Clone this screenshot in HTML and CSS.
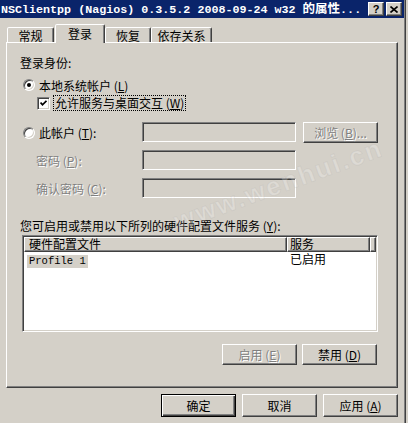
FILE: index.html
```html
<!DOCTYPE html>
<html lang="zh-CN">
<head>
<meta charset="utf-8">
<title>NSClientpp 的属性</title>
<link rel="stylesheet" href="styles.css">
</head>
<body>
<div class="window">
  <div class="titlebar">
    <span class="title">NSClientpp (Nagios) 0.3.5.2 2008-09-24 w32 <span class="cjk">的属性</span>...</span>
    <div class="tbtns">
      <span class="tbtn help">?</span>
      <span class="tbtn close"><svg width="8" height="7" viewBox="0 0 8 7"><path d="M0.5 0.5 L7.5 6.5 M7.5 0.5 L0.5 6.5" stroke="#000" stroke-width="1.6" fill="none"/></svg></span>
    </div>
  </div>

  <div class="tabs">
    <div class="tab t1">常规</div>
    <div class="tab t2 sel">登录</div>
    <div class="tab t3">恢复</div>
    <div class="tab t4">依存关系</div>
  </div>

  <div class="panel">
    <div class="lbl l1">登录身份:</div>
    <div class="row r-radio1"><span class="radio on"></span><span class="rtext">本地系统帐户 (<u>L</u>)</span></div>
    <div class="row r-check">
      <span class="check"><svg width="7" height="7" viewBox="0 0 7 7"><path d="M0.5 2.5 L2.5 4.8 L6.5 0.8" stroke="#000" stroke-width="1.8" fill="none"/></svg></span>
      <span class="focus">允许服务与桌面交互 (<u>W</u>)</span>
    </div>
    <div class="row r-field r-acct">
      <span class="fl fl-radio"><span class="radio"></span><span class="rtext">此帐户 (<u>T</u>):</span></span>
      <span class="input"></span>
      <span class="btn dis browse">浏览 (<u>B</u>)...</span>
    </div>
    <div class="row r-field r-pwd">
      <span class="fl fl-plain dis">密码 (<u>P</u>):</span>
      <span class="input"></span>
    </div>
    <div class="row r-field r-pwd">
      <span class="fl fl-plain dis">确认密码 (<u>C</u>):</span>
      <span class="input"></span>
    </div>
    <div class="lbl l2">您可启用或禁用以下所列的硬件配置文件服务 (<u>Y</u>):</div>
    <div class="list">
      <div class="hdr">
        <span class="hc hc1">硬件配置文件</span>
        <span class="hc hc2">服务</span>
        <span class="hc hc3"></span>
      </div>
      <div class="lrow">
        <span class="c1"><span class="selitem">Profile 1</span></span>
        <span class="c2">已启用</span>
      </div>
    </div>
    <div class="prow">
      <span class="btn dis pbtn">启用 (<u>E</u>)</span>
      <span class="btn pbtn">禁用 (<u>D</u>)</span>
    </div>
  </div>

  <div class="footer">
    <span class="btn fbtn default">确定</span>
    <span class="btn fbtn">取消</span>
    <span class="btn fbtn">应用 (<u>A</u>)</span>
  </div>

  <div class="watermark" aria-hidden="true">www.wenhui.cn</div>
</div>
</body>
</html>
```

FILE: styles.css
```css
* { box-sizing: border-box; }
html, body { margin: 0; padding: 0; }
body {
  background: #d4d0c8;
  width: 408px;
  height: 423px;
  overflow: hidden;
  font-family: "Noto Sans CJK SC", "Liberation Sans", sans-serif;
  font-size: 12px;
  color: #000;
}
u { text-decoration: underline; text-underline-offset: 1px; }

.window {
  position: relative;
  width: 406px;
  height: 423px;
  border-right: 1px solid #404040;
  box-shadow: inset -1px 0 #808080;
}

/* title bar */
.titlebar {
  height: 18px;
  width: 404px;
  background: #0a246a;
  display: flex;
  align-items: center;
  justify-content: space-between;
  padding: 0 2px 0 1px;
}
.title {
  flex: none;
  color: #fff;
  font-family: "Liberation Mono", monospace;
  font-weight: bold;
  font-size: 11.7px;
  white-space: nowrap;
  line-height: 18px;
}
.title .cjk {
  font-family: "Noto Sans CJK SC", sans-serif;
  font-size: 12.5px;
}
.tbtns { display: flex; gap: 2px; flex: none; }
.tbtn {
  width: 16px;
  height: 14px;
  background: #d4d0c8;
  border: 1px solid;
  border-color: #fff #404040 #404040 #fff;
  box-shadow: inset -1px -1px #808080;
  display: flex;
  align-items: center;
  justify-content: center;
}
.tbtn.help {
  font-family: "Liberation Sans", sans-serif;
  font-weight: bold;
  font-size: 11px;
  line-height: 12px;
}

/* tabs */
.tabs {
  display: flex;
  align-items: flex-end;
  height: 24px;
  padding-left: 7px;
  position: relative;
  z-index: 1;
}
.tab {
  height: 15px;
  border: 1px solid;
  border-bottom: none;
  border-color: #fff #404040 transparent #fff;
  box-shadow: inset -1px 0 #808080;
  border-radius: 2px 2px 0 0;
  display: flex;
  align-items: center;
  justify-content: center;
  line-height: 13px;
  background: #d4d0c8;
}
.t1 { width: 47px; }
.t2 { width: 50px; margin-left: 1px; }
.t3 { width: 46px; }
.t4 { width: 61px; }
.tab.sel {
  height: 19px;
  margin-bottom: -1px;
  align-items: flex-start;
  padding-top: 2px;
  z-index: 2;
}

/* panel */
.panel {
  margin-left: 6px;
  width: 392px;
  height: 346px;
  border: 1px solid;
  border-color: #fff #404040 #404040 #fff;
  box-shadow: inset -1px -1px #808080;
  padding: 12px 0 0 13px;
}
.lbl { height: 16px; line-height: 16px; white-space: nowrap; }
.row { display: flex; align-items: center; white-space: nowrap; }
.r-radio1 { margin-top: 6px; height: 16px; padding-left: 3px; }
.r-check { margin-top: 2px; height: 16px; padding-left: 17px; }
.r-acct { margin-top: 11px; }
.r-pwd { margin-top: 7px; }
.r-field { height: 21px; }
.l2 { margin-top: 19px; }

.radio {
  position: relative;
  width: 12px;
  height: 12px;
  border-radius: 50%;
  background: #fff;
  border: 1px solid;
  border-color: #808080 #fff #fff #808080;
  box-shadow: inset 1px 1px #404040, inset -1px -1px #d4d0c8;
  flex: none;
}
.radio.on::after {
  content: "";
  position: absolute;
  left: 3px;
  top: 3px;
  width: 4px;
  height: 4px;
  border-radius: 50%;
  background: #000;
}
.rtext { margin-left: 4px; }

.check {
  width: 13px;
  height: 13px;
  background: #fff;
  border: 1px solid;
  border-color: #808080 #fff #fff #808080;
  box-shadow: inset 1px 1px #404040, inset -1px -1px #d4d0c8;
  display: flex;
  align-items: center;
  justify-content: center;
  flex: none;
}
.focus {
  margin-left: 3px;
  height: 16px;
  line-height: 14px;
  border: 1px dotted #000;
  padding: 0 1px;
}

.fl { width: 122px; flex: none; display: flex; align-items: center; }
.fl-radio { padding-left: 3px; }
.fl-plain { padding-left: 16px; }
.dis { color: #808080; text-shadow: 1px 1px 0 #fff; }

.input {
  width: 154px;
  height: 20px;
  flex: none;
  align-self: flex-start;
  background: #d4d0c8;
  border: 1px solid;
  border-color: #808080 #fff #fff #808080;
  box-shadow: inset 1px 1px #404040, inset -1px -1px #d4d0c8;
}

.btn {
  display: flex;
  align-items: center;
  justify-content: center;
  width: 75px;
  flex: none;
  background: #d4d0c8;
  border: 1px solid;
  border-color: #fff #404040 #404040 #fff;
  box-shadow: inset -1px -1px #808080;
  white-space: nowrap;
}
.browse { margin-left: 7px; height: 21px; }

/* list view */
.list {
  margin-top: 1px;
  margin-left: 2px;
  width: 356px;
  height: 97px;
  background: #fff;
  border: 1px solid;
  border-color: #808080 #fff #fff #808080;
  box-shadow: inset 1px 1px #404040, inset -1px -1px #d4d0c8;
  padding: 1px;
}
.hdr { display: flex; height: 15px; }
.hc {
  height: 15px;
  background: #d4d0c8;
  border: 1px solid;
  border-color: #fff #404040 #404040 #fff;
  box-shadow: inset -1px -1px #808080;
  line-height: 12px;
  padding-left: 4px;
  white-space: nowrap;
}
.hc1 { width: 263px; }
.hc2 { width: 83px; padding-left: 2px; }
.hc3 { flex: 1; padding: 0; }
.lrow { display: flex; height: 13px; line-height: 12px; margin-top: 1px; }
.c1 { width: 263px; padding-left: 3px; }
.c2 { padding-left: 3px; }
.selitem {
  display: inline-block;
  background: #d4d0c8;
  padding: 0 2px;
  font-family: "Liberation Mono", monospace;
  font-size: 10.5px;
  line-height: 13px;
}

.prow {
  margin-top: 12px;
  width: 357px;
  display: flex;
  justify-content: flex-end;
  gap: 5px;
}
.pbtn { height: 21px; }

/* footer */
.footer {
  margin-top: 6px;
  width: 398px;
  display: flex;
  justify-content: flex-end;
  gap: 6px;
}
.fbtn { height: 23px; }
.fbtn.default {
  border: 1px solid #000;
  box-shadow: inset 1px 1px #fff, inset -1px -1px #404040, inset -2px -2px #808080;
}

.watermark {
  position: absolute;
  left: 175px;
  top: 209px;
  font-family: "Liberation Sans", sans-serif;
  font-weight: bold;
  font-size: 26px;
  line-height: 26px;
  letter-spacing: 2px;
  color: rgba(255, 255, 255, 0.22);
  -webkit-text-stroke: 1px rgba(160, 160, 160, 0.16);
  transform: rotate(-20deg);
  transform-origin: left center;
  pointer-events: none;
  white-space: nowrap;
}
```
